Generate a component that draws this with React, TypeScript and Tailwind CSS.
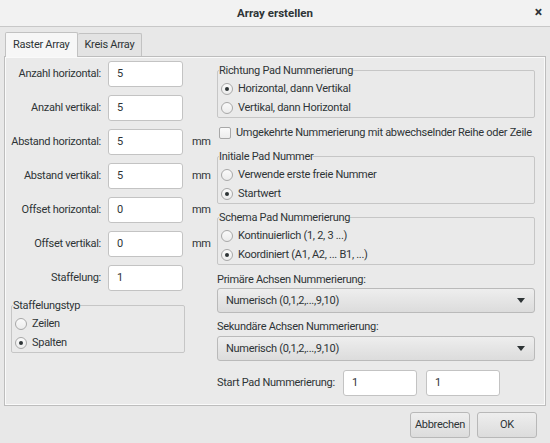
import React from "react";

const Radio = ({ checked, label }: { checked?: boolean; label: string }) => (
  <div className="flex items-center h-[19px]">
    <span className="shrink-0 w-[12px] h-[12px] rounded-full border border-[#a8a8a8] bg-gradient-to-b from-[#fafafa] to-[#ececec] flex items-center justify-center ml-[3px] mr-[5px]">
      {checked && <span className="w-[4px] h-[4px] rounded-full bg-[#2e3436]" />}
    </span>
    <span>{label}</span>
  </div>
);

const Group = ({ title, children, className }: { title: string; children: React.ReactNode; className?: string }) => (
  <fieldset className={"border border-[#c6c6c6] rounded-[2px] " + (className ?? "")}>
    <legend className="ml-[1px] leading-[13px]">{title}</legend>
    <div className="mt-[2px]">{children}</div>
  </fieldset>
);

const Input = ({ value, w = "w-[75px]" }: { value: string; w?: string }) => (
  <div className={"h-[26px] bg-white border border-[#c3c3c3] rounded-[3px] flex items-center pl-[8px] " + w}>{value}</div>
);

const Row = ({ label, value, unit }: { label: string; value: string; unit?: boolean }) => (
  <div className="flex items-center h-[26px]">
    <div className="w-[96px] text-right">{label}</div>
    <div className="ml-[7px]">
      <Input value={value} />
    </div>
    {unit && <div className="ml-[9px]">mm</div>}
  </div>
);

const Select = ({ value }: { value: string }) => (
  <div className="h-[25px] rounded-[3px] border border-[#bababa] bg-gradient-to-b from-[#eeeeee] to-[#dcdcdc] flex items-center justify-between pl-[8px] pr-[9px]">
    <span>{value}</span>
    <svg width="8" height="5" viewBox="0 0 8 5">
      <path d="M0 0 H8 L4 5 Z" fill="#2e3436" />
    </svg>
  </div>
);

export default function App() {
  return (
    <div
      className="w-[550px] h-[443px] bg-[#e8e8e8] flex flex-col text-[11px] tracking-[-0.28px] text-[#2e3436] leading-[14px] whitespace-nowrap"
      style={{ fontFamily: 'Roboto, "Noto Sans", sans-serif' }}
    >
      <div className="h-[27px] bg-[#f2f2f2] border-b border-[#c8c8c8] flex items-center justify-center relative shrink-0">
        <span className="font-bold text-[11.5px] tracking-normal">Array erstellen</span>
        <span className="absolute right-[8px] top-[5px] font-bold text-[14px]">×</span>
      </div>
      <div className="px-[4px] pt-[5px]">
        <div className="flex items-end h-[24px] pl-[1px]">
          <div className="h-[25px] px-[7px] flex items-center bg-[#f7f7f7] border border-b-0 border-[#c2c2c2] rounded-t-[2px] relative top-[1px]">
            Raster Array
          </div>
          <div className="h-[23px] px-[7px] flex items-center bg-[#e3e3e3] border border-b-0 border-l-0 border-[#c2c2c2] rounded-t-[2px]">
            Kreis Array
          </div>
        </div>
        <div className="h-[350px] border border-[#bdbdbd] shadow-[inset_0_0_0_1px_#fafafa] bg-[#eaeaea] flex">
          <div className="w-[212px] pt-[4px] flex flex-col">
            <div className="flex flex-col gap-[8px]">
              <Row label="Anzahl horizontal:" value="5" />
              <Row label="Anzahl vertikal:" value="5" />
              <Row label="Abstand horizontal:" value="5" unit />
              <Row label="Abstand vertikal:" value="5" unit />
              <Row label="Offset horizontal:" value="0" unit />
              <Row label="Offset vertikal:" value="0" unit />
              <Row label="Staffelung:" value="1" />
            </div>
            <div className="ml-[6px] w-[174px] mt-[8px]">
              <Group title="Staffelungstyp">
                <Radio label="Zeilen" />
                <Radio label="Spalten" checked />
              </Group>
            </div>
          </div>
          <div className="w-[318px] pt-[7px] flex flex-col">
            <Group title="Richtung Pad Nummerierung">
              <Radio label="Horizontal, dann Vertikal" checked />
              <Radio label="Vertikal, dann Horizontal" />
            </Group>
            <div className="flex items-center mt-[6px] h-[18px]">
              <span className="shrink-0 w-[12px] h-[12px] rounded-[2px] border border-[#a8a8a8] bg-gradient-to-b from-[#fafafa] to-[#ececec] ml-[2px] mr-[5px]" />
              <span>Umgekehrte Nummerierung mit abwechselnder Reihe oder Zeile</span>
            </div>
            <Group title="Initiale Pad Nummer" className="mt-[8px]">
              <Radio label="Verwende erste freie Nummer" />
              <Radio label="Startwert" checked />
            </Group>
            <Group title="Schema Pad Nummerierung" className="mt-[7px]">
              <Radio label="Kontinuierlich (1, 2, 3 ...)" />
              <Radio label="Koordiniert (A1, A2, ... B1, ...)" checked />
            </Group>
            <div className="mt-[8px] mb-[1px]">Primäre Achsen Nummerierung:</div>
            <Select value="Numerisch (0,1,2,...,9,10)" />
            <div className="mt-[7px] mb-[2px]">Sekundäre Achsen Nummerierung:</div>
            <Select value="Numerisch (0,1,2,...,9,10)" />
            <div className="flex items-center mt-[9px]">
              <span className="w-[126px]">Start Pad Nummerierung:</span>
              <Input value="1" w="w-[74px]" />
              <div className="ml-[9px]">
                <Input value="1" w="w-[74px]" />
              </div>
            </div>
          </div>
        </div>
      </div>
      <div className="flex justify-end gap-[7px] pr-[13px] mt-[6px]">
        <div className="w-[60px] h-[26px] rounded-[3px] border border-[#b8b8b8] bg-gradient-to-b from-[#eeeeee] to-[#dcdcdc] flex items-center justify-center">
          Abbrechen
        </div>
        <div className="w-[60px] h-[26px] rounded-[3px] border border-[#b8b8b8] bg-gradient-to-b from-[#eeeeee] to-[#dcdcdc] flex items-center justify-center">
          OK
        </div>
      </div>
    </div>
  );
}
